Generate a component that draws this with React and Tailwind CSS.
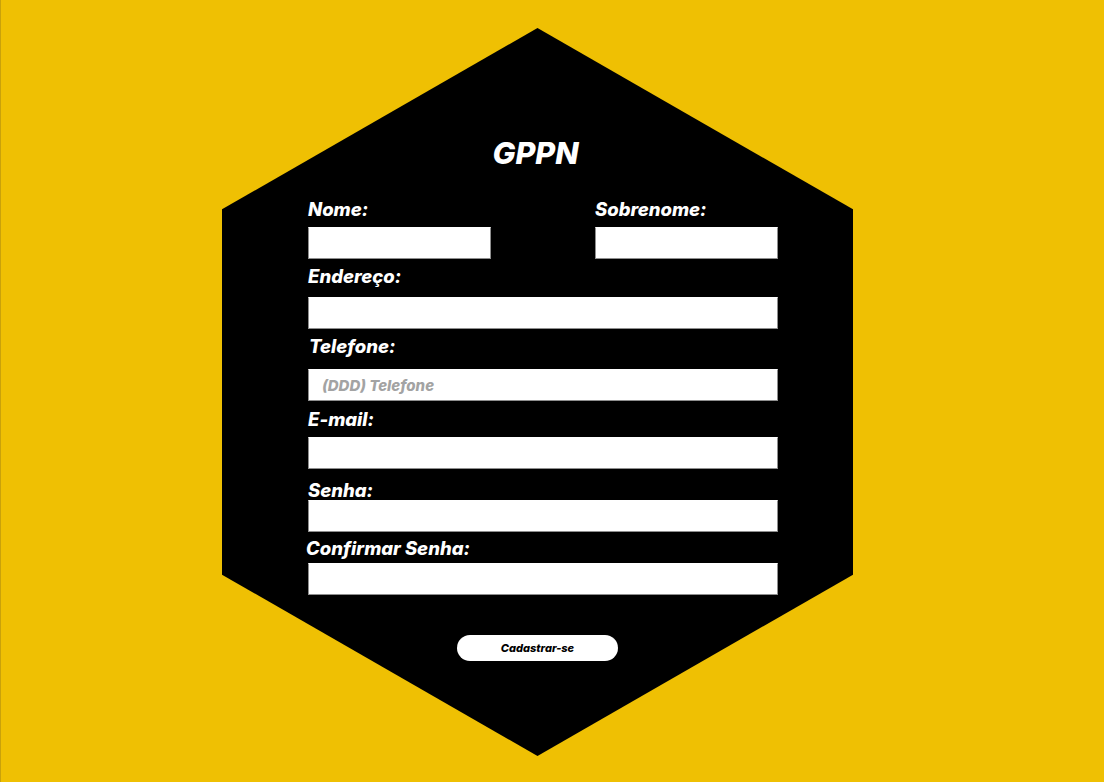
const fieldClass =
  "block w-full h-8 bg-white border-x border-b border-t border-[#8e8e8e] border-t-white px-[13px] text-[15px] font-extrabold italic text-black placeholder:text-[#a3a3a3] outline-none";

const labelClass = "block text-[18.5px] leading-[18px] font-extrabold italic text-white";

export default function App() {
  return (
    <div className="min-h-screen bg-[#efc003] border-l border-[#c9a20a] pl-[221px] pt-[28px] font-['Inter',sans-serif]">
      <div className="w-[631px] h-[728px] bg-black [clip-path:polygon(50%_0,100%_24.9%,100%_75.1%,50%_100%,0_75.1%,0_24.9%)] pt-[107px]">
        <h1 className="text-center text-[30.5px] leading-[36px] font-extrabold italic text-white -ml-[4px]">
          GPPN
        </h1>

        <form className="w-[470px] ml-[86px] mt-[29px]">
          <div className="flex justify-between">
            <div className="w-[183px]">
              <label className={labelClass}>Nome:</label>
              <input className={fieldClass + " mt-[9px]"} />
            </div>
            <div className="w-[183px]">
              <label className={labelClass}>Sobrenome:</label>
              <input className={fieldClass + " mt-[9px]"} />
            </div>
          </div>

          <label className={labelClass + " mt-[8px]"}>Endereço:</label>
          <input className={fieldClass + " mt-[12px]"} />

          <label className={labelClass + " mt-[8px] ml-px"}>Telefone:</label>
          <input className={fieldClass + " mt-[14px]"} placeholder="(DDD) Telefone" />

          <label className={labelClass + " mt-[9px]"}>E-mail:</label>
          <input className={fieldClass + " mt-[9px]"} />

          <label className={labelClass + " mt-[12px]"}>Senha:</label>
          <input className={fieldClass + " mt-px"} type="password" />

          <label className={labelClass + " mt-[7px] -ml-[2px]"}>Confirmar Senha:</label>
          <input className={fieldClass + " mt-[6px]"} type="password" />

          <div className="flex mt-[40px] pl-[149px]">
            <button
              type="button"
              className="w-[161px] h-[26px] rounded-[13px] bg-white text-[11px] font-extrabold italic text-black"
            >
              Cadastrar-se
            </button>
          </div>
        </form>
      </div>
    </div>
  );
}
